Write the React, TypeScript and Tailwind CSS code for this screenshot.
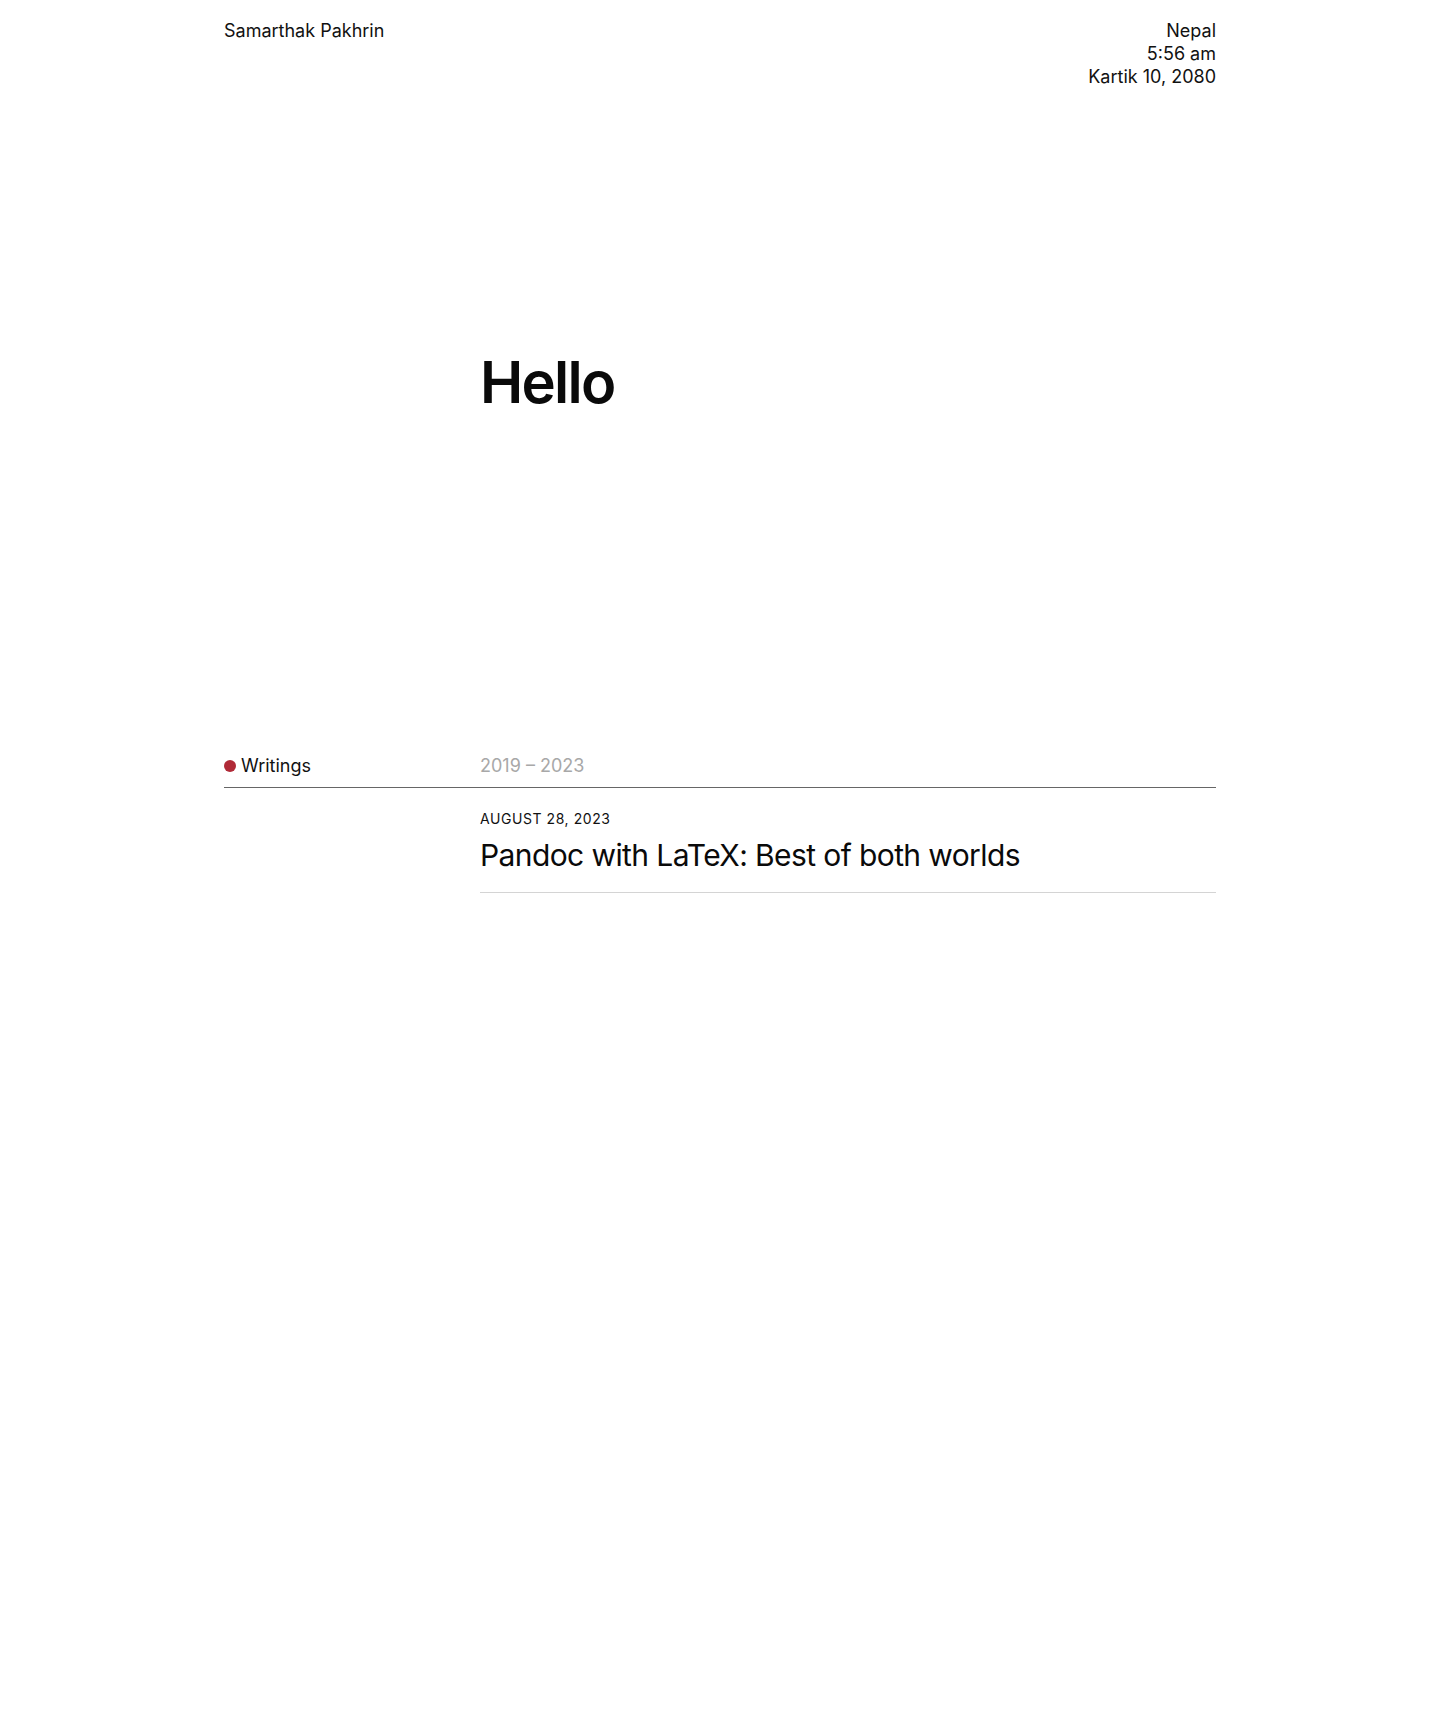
export default function App() {
  const posts = [{ date: "August 28, 2023", title: "Pandoc with LaTeX: Best of both worlds" }]

  return (
    <div className="min-h-[1733px] bg-white text-[#111] font-['Inter','Liberation_Sans',sans-serif]">
      <div className="mx-auto w-[992px]">
        <header className="flex justify-between pt-[19px] text-[18px] leading-[23px]">
          <div>Samarthak Pakhrin</div>
          <div className="text-right">
            <div>Nepal</div>
            <div>5:56 am</div>
            <div>Kartik 10, 2080</div>
          </div>
        </header>

        <div className="grid grid-cols-[256px_1fr] mt-[265px]">
          <div />
          <h1 className="text-[58px] leading-[58px] font-semibold tracking-[-0.03em] text-[#0a0a0a]">Hello</h1>
        </div>

        <section className="mt-[343px]">
          <div className="grid grid-cols-[256px_1fr] border-b border-[#666] pb-[10px] text-[18px] leading-[23px]">
            <div className="flex items-center gap-[5px]">
              <span className="w-3 h-3 rounded-full bg-[#b02a37]" />
              <span>Writings</span>
            </div>
            <div className="text-[#a8a8a8]">2019 – 2023</div>
          </div>

          <div className="grid grid-cols-[256px_1fr]">
            <div />
            <ul>
              {posts.map((p) => (
                <li key={p.title} className="border-b border-[#d4d4d4] pt-[21px] pb-[19px]">
                  <div className="text-[14px] leading-[20px] uppercase tracking-[0.04em]">{p.date}</div>
                  <a href="#" className="block mt-2 text-[30px] leading-[36px] tracking-[-0.02em] text-[#0a0a0a]">
                    {p.title}
                  </a>
                </li>
              ))}
            </ul>
          </div>
        </section>
      </div>
    </div>
  )
}
